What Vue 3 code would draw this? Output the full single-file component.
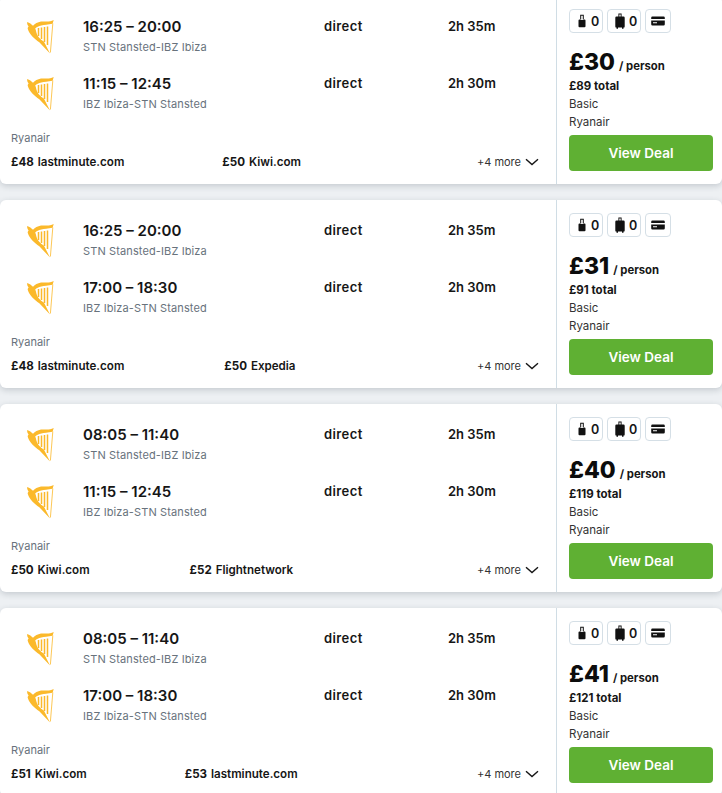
<script setup>
const cards = [
  { out: '16:25 – 20:00', back: '11:15 – 12:45', d2: '2h 30m', price: '£30', total: '£89 total', gap: 98,
    a: ['£48', 'lastminute.com'], b: ['£50', 'Kiwi.com'] },
  { out: '16:25 – 20:00', back: '17:00 – 18:30', d2: '2h 30m', price: '£31', total: '£91 total', gap: 100,
    a: ['£48', 'lastminute.com'], b: ['£50', 'Expedia'] },
  { out: '08:05 – 11:40', back: '11:15 – 12:45', d2: '2h 30m', price: '£40', total: '£119 total', gap: 100,
    a: ['£50', 'Kiwi.com'], b: ['£52', 'Flightnetwork'] },
  { out: '08:05 – 11:40', back: '17:00 – 18:30', d2: '2h 30m', price: '£41', total: '£121 total', gap: 98,
    a: ['£51', 'Kiwi.com'], b: ['£53', 'lastminute.com'] }
]
const legs = (c) => [
  { time: c.out, route: 'STN Stansted-IBZ Ibiza', dur: '2h 35m' },
  { time: c.back, route: 'IBZ Ibiza-STN Stansted', dur: c.d2 }
]
</script>

<template>
  <div class="page">
    <article v-for="(c, i) in cards" :key="i" class="card">
      <div class="main">
        <div class="legs">
          <div v-for="(l, j) in legs(c)" :key="j" class="leg">
            <svg class="logo" viewBox="0 0 28 34" aria-hidden="true">
              <path fill="#fbb92b" d="M26.700 0C22 2.500 18 1 14 1.600 10.500 2.200 8 3.800 6 5.800 4.500 4.200 2.500 2.800 .2 2 0 3.500 .3 5 1.600 6.400 .6 7.400 .5 8.200 .9 9.200 2.500 14.500 7.500 18.800 12.300 22.200L23 33.500 17 21.800C13 19 10 16 9.400 12.500 9 10 8.400 9 8.200 8.400 11 5.600 16 5.200 25.600 3.800Z" />
              <path fill="none" stroke="#fbb92b" stroke-width=".8" d="M25.800 3.500 23.400 32.500" />
              <path fill="none" stroke="#fbb92b" stroke-width="1.500" d="M11.500 8V16M14.500 7.500V19M17.500 7V22M20.500 6.500V25" />
            </svg>
            <div class="times">
              <div class="time">{{ l.time }}</div>
              <div class="route">{{ l.route }}</div>
            </div>
            <div class="direct">direct</div>
            <div class="dur">{{ l.dur }}</div>
          </div>
        </div>
        <div class="airline">Ryanair</div>
        <div class="offers" :style="{ gap: c.gap + 'px' }">
          <div class="offer"><b>{{ c.a[0] }}</b> <span>{{ c.a[1] }}</span></div>
          <div class="offer"><b>{{ c.b[0] }}</b> <span>{{ c.b[1] }}</span></div>
          <div class="more">
            +4 more
            <svg class="chev" viewBox="0 0 14 8" aria-hidden="true">
              <path d="M1 1.200 7 6.600 13 1.200" fill="none" stroke="#161616" stroke-width="1.400" />
            </svg>
          </div>
        </div>
      </div>
      <aside class="side">
        <div class="fees">
          <div class="fee bag-small">
            <svg class="ic" viewBox="0 0 8 14" width="8" height="14" aria-hidden="true">
              <path fill="#111" fill-rule="evenodd" d="M2.200 6V.8h3.600V6ZM3.200 1.700V5.400h1.600V1.700ZM1.500 5.600h5a1 1 0 0 1 1 1v5.700a1 1 0 0 1-1 1h-5a1 1 0 0 1-1-1V6.600a1 1 0 0 1 1-1Z" />
            </svg>
            <span>0</span>
          </div>
          <div class="fee bag-large">
            <svg class="ic" viewBox="0 0 10 16" width="10" height="16" aria-hidden="true">
              <path fill="#111" d="M3.400 4V.5h3.200V4h-.9V1.400H4.300V4ZM1.500 3.600h7a1.200 1.200 0 0 1 1.200 1.200v8.600a1.200 1.200 0 0 1-1.200 1.200h-7A1.200 1.200 0 0 1 .3 13.400V4.800A1.200 1.200 0 0 1 1.500 3.600ZM1.500 14.600H3v1.200H1.500ZM7 14.600h1.500v1.200H7Z" />
            </svg>
            <span>0</span>
          </div>
          <div class="fee bag-card">
            <svg viewBox="0 0 14 10" width="14" height="10" aria-hidden="true">
              <path fill="#111" fill-rule="evenodd" d="M1.400.6h11.200A1.200 1.200 0 0 1 13.800 1.800v6.400a1.200 1.200 0 0 1-1.200 1.200H1.400A1.200 1.200 0 0 1 .2 8.200V1.800A1.200 1.200 0 0 1 1.400.6ZM.2 3v1.600h13.600V3ZM2 6.200v1h4v-1Z" />
            </svg>
          </div>
        </div>
        <div class="price"><strong>{{ c.price }}</strong><span>/ person</span></div>
        <div class="total">{{ c.total }}</div>
        <div class="meta">Basic</div>
        <div class="meta">Ryanair</div>
        <button class="deal" type="button">View Deal</button>
      </aside>
    </article>
  </div>
</template>

<style>
html, body { margin: 0; background: #edf0f3; }
</style>

<style scoped>
.page {
  font-family: Inter, "Noto Sans", sans-serif;
  color: #161616;
  margin-top: -4px;
  height: 797px;
  overflow: hidden;
  display: flex;
  flex-direction: column;
  gap: 16px;
}
.card {
  flex: none;
  height: 188px;
  display: flex;
  background: #fff;
  border-radius: 6px;
  box-shadow: 0 2px 6px rgba(37, 52, 66, 0.2);
}
.main {
  width: 556px;
  flex: none;
  box-sizing: border-box;
  padding: 4px 17px 0 11px;
  display: flex;
  flex-direction: column;
}
.legs {
  display: flex;
  flex-direction: column;
  padding-top: 20px;
  gap: 23px;
}
.leg {
  display: flex;
  height: 34px;
  align-items: flex-start;
}
.logo {
  width: 28px;
  height: 34px;
  margin-left: 16px;
  flex: none;
}
.times {
  width: 241px;
  margin-left: 28px;
  flex: none;
}
.time {
  font-size: 15px;
  font-weight: 600;
  line-height: 16px;
  margin-top: -1px;
}
.route {
  font-size: 11px;
  line-height: 14px;
  color: #68727c;
  margin-top: 5px;
  letter-spacing: 0.12px;
}
.direct, .dur {
  font-size: 13px;
  font-weight: 600;
  line-height: 16px;
  margin-top: -2px;
}
.direct { width: 124px; flex: none; letter-spacing: 0.4px; }
.airline {
  margin-top: 20px;
  font-size: 11px;
  line-height: 14px;
  color: #68727c;
}
.offers {
  margin-top: 10px;
  display: flex;
  align-items: center;
  line-height: 14px;
  font-size: 11.600px;
}
.offer { font-weight: 600; white-space: nowrap; }
.offer b { font-weight: 700; margin-right: 1px; }
.more {
  margin-left: auto;
  display: flex;
  align-items: center;
  gap: 4px;
  font-size: 11px;
  font-weight: 400;
  color: #333;
}
.chev { width: 14px; height: 8px; }
.side {
  flex: 1;
  box-sizing: border-box;
  border-left: 1px solid #d0dde5;
  padding: 13px 9px 13px 12px;
  display: flex;
  flex-direction: column;
}
.fees {
  display: flex;
  gap: 4px;
}
.fee {
  width: 34px;
  height: 24px;
  box-sizing: border-box;
  border: 1px solid #d5dfe6;
  border-radius: 4px;
  display: flex;
  align-items: center;
  font-size: 12.500px;
  font-weight: 600;
}
.bag-small { padding-left: 8px; gap: 5px; }
.bag-large { padding-left: 7px; gap: 4px; }
.bag-card { width: 26px; justify-content: center; }
.ic { flex: none; }
.price {
  display: flex;
  align-items: baseline;
  margin-top: 18px;
  line-height: 23px;
}
.price strong { font-size: 23px; font-weight: 800; color: #0c0c0c; }
.price span { font-size: 11.300px; font-weight: 700; margin-left: 4px; }
.total {
  font-size: 11.500px;
  font-weight: 700;
  line-height: 17px;
}
.meta {
  font-size: 11.500px;
  line-height: 18px;
  color: #333;
}
.deal {
  margin-top: 4px;
  height: 36px;
  border: 0;
  border-radius: 4px;
  background: #5fb033;
  color: #fff;
  font: 600 13.500px Inter, "Noto Sans", sans-serif;
}
</style>
